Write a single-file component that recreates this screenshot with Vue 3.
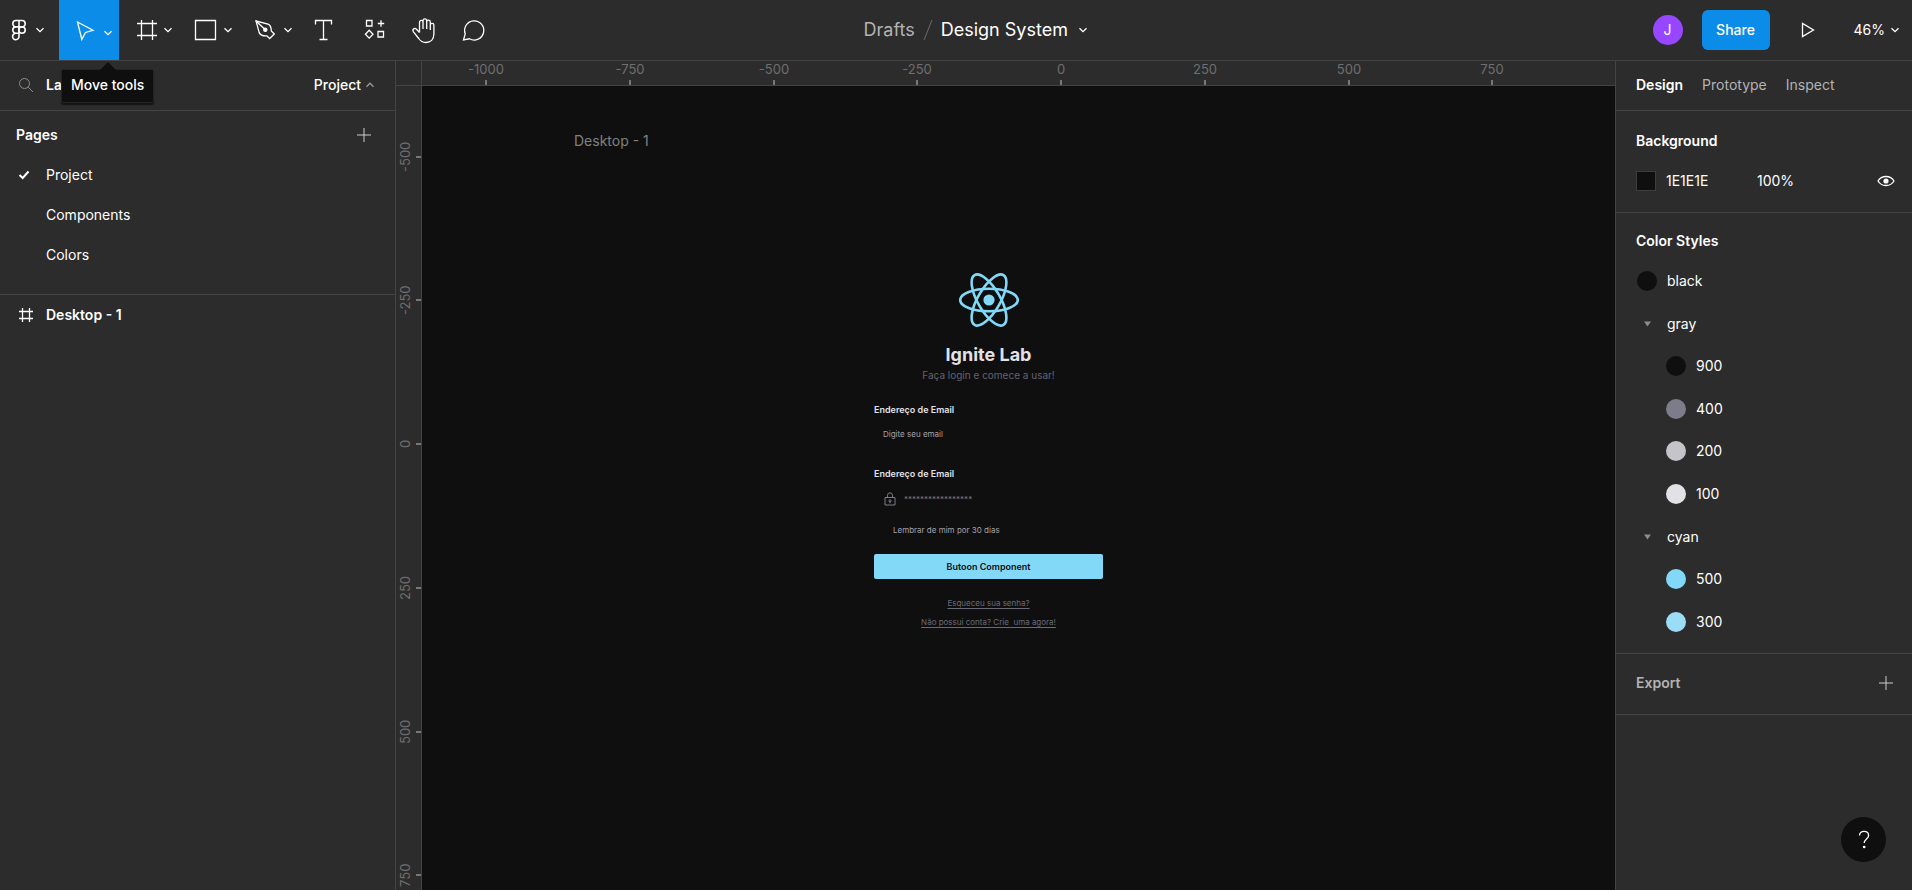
<script setup>
import { ref } from 'vue'

const SCALE = 0.575
const ticksX = [-1000, -750, -500, -250, 0, 250, 500, 750]
const ticksY = [-500, -250, 0, 250, 500, 750]
const atX = (v) => Math.round(639 + v * SCALE) + 'px'
const atY = (v) => Math.round(358 + v * SCALE) + 'px'

const pages = ['Project', 'Components', 'Colors']
const currentPage = ref('Project')

const styles = [
  { name: 'black', color: '#0f0f0f', level: 0 },
  { name: 'gray', group: true, level: 0 },
  { name: '900', color: '#0f0f0f', level: 1 },
  { name: '400', color: '#7c7c8a', level: 1 },
  { name: '200', color: '#c4c4c9', level: 1 },
  { name: '100', color: '#e1e1e6', level: 1 },
  { name: 'cyan', group: true, level: 0 },
  { name: '500', color: '#81d8f7', level: 1 },
  { name: '300', color: '#9bddf7', level: 1 }
]

const hex = ref('1E1E1E')
const opacity = ref('100%')
const password = ref('*****************')
</script>

<template>
  <div class="app">
    <header class="topbar">
      <nav class="tools" aria-label="Tools">
        <button class="tool menu" aria-label="Main menu">
          <svg class="icon" viewBox="0 0 36 36">
            <path d="M18 8.5h-3a3.2 3.2 0 0 0 0 6.4h3zM18 8.5h3a3.2 3.2 0 0 1 0 6.4h-3zM18 14.9h-3a3.2 3.2 0 0 0 0 6.4h3zM18 21.3h-3a3.2 3.2 0 1 0 3 3.2z" />
            <circle cx="21" cy="18.1" r="3.2" />
          </svg>
          <svg class="chev" viewBox="0 0 10 10"><path d="M1.5 3.2 5 6.7l3.5-3.5" /></svg>
        </button>
        <button class="tool active" aria-label="Move" aria-describedby="tip">
          <svg class="icon" viewBox="0 0 36 36"><path d="M10.5 10 26 18.3l-7.5 2.2-3.7 7z" /></svg>
          <svg class="chev low" viewBox="0 0 10 10"><path d="M1.5 3.2 5 6.7l3.5-3.5" /></svg>
        </button>
        <button class="tool" aria-label="Frame">
          <svg class="icon" viewBox="0 0 36 36"><path d="M14.5 8v20M25.500 8v20M10 11.500h20M10 23.500h20" /></svg>
          <svg class="chev" viewBox="0 0 10 10"><path d="M1.5 3.2 5 6.7l3.5-3.5" /></svg>
        </button>
        <button class="tool" aria-label="Rectangle">
          <svg class="icon" viewBox="0 0 36 36"><path d="M8.5 8.5h20v19h-20z" /></svg>
          <svg class="chev" viewBox="0 0 10 10"><path d="M1.5 3.2 5 6.7l3.5-3.5" /></svg>
        </button>
        <button class="tool" aria-label="Pen">
          <svg class="icon" viewBox="0 0 36 36">
            <path d="M9 9l12 3.2c2 .8 3.300 3.500 3.300 6.800l3 3-4.600 4.500-2.800-2.600c-4 .3-6.600-1-7.700-3.300z" />
            <path d="M9 9l8.500 8" />
            <circle cx="18.3" cy="17.8" r="1.6" class="solid" />
          </svg>
          <svg class="chev" viewBox="0 0 10 10"><path d="M1.5 3.2 5 6.7l3.5-3.5" /></svg>
        </button>
        <button class="tool single" aria-label="Text">
          <svg class="icon" viewBox="0 0 36 36"><path d="M9.500 12.500v-4h16v4M17.500 8.500v19M13.500 27.500h8" /></svg>
        </button>
        <button class="tool single" aria-label="Resources">
          <svg class="icon" viewBox="0 0 36 36">
            <path d="M10.500 8.500H16V14h-5.500zM22 19.500h5.500V25H22zM25 8.300v6.400M21.800 11.500h6.400M13.200 18.300l3.800 3.900-3.800 3.900-3.800-3.900z" />
          </svg>
        </button>
        <button class="tool single" aria-label="Hand">
          <svg class="icon" viewBox="0 0 36 36">
            <path d="M13.500 20.500V10.300c0-2.500 3.500-2.500 3.500 0V17M17 10V8.800c0-2.600 3.700-2.600 3.700 0V17M20.700 10c0-2.400 3.600-2.400 3.600 0v8M24.300 13c0-2.300 3.600-2.300 3.600 0v9c0 5.500-3.500 8.500-8 8.500-3.600 0-5.500-1.500-7.200-4l-5.200-6.700c-1.800-2.600 1.300-4.400 3-2.500l3 3.200" />
          </svg>
        </button>
        <button class="tool single" aria-label="Comment">
          <svg class="icon" viewBox="0 0 36 36"><path d="M7.500 28l1.700-6.200a9.600 9.600 0 1 1 4.300 5z" /></svg>
        </button>
      </nav>

      <div class="title">
        <a href="#" class="drafts">Drafts</a>
        <svg class="slash" viewBox="0 0 10 22"><path d="M9 1 1 21" /></svg>
        <button class="file">
          Design System
          <svg class="chev" viewBox="0 0 10 10"><path d="M1.5 3.2 5 6.7l3.5-3.5" /></svg>
        </button>
      </div>

      <div class="actions">
        <span class="avatar">J</span>
        <button class="share">Share</button>
        <button class="play" aria-label="Present">
          <svg viewBox="0 0 14 16"><path d="M1.5 1.5v13L12.500 8z" /></svg>
        </button>
        <button class="zoom">
          46%
          <svg class="chev" viewBox="0 0 10 10"><path d="M1.5 3.2 5 6.7l3.5-3.5" /></svg>
        </button>
      </div>
    </header>

    <main class="workspace">
      <aside class="left">
        <div class="layer-tabs">
          <button class="search" aria-label="Search">
            <svg viewBox="0 0 16 16"><circle cx="6.5" cy="6.5" r="5" /><path d="M10.2 10.2 15 15" /></svg>
          </button>
          <button class="ltab" aria-label="Layers">La</button>
          <button class="page-menu">
            Project
            <svg class="chev" viewBox="0 0 10 10"><path d="M1.5 6.700 5 3.200l3.500 3.500" /></svg>
          </button>
          <div id="tip" class="tooltip" role="tooltip">Move tools</div>
        </div>

        <section class="pages">
          <div class="pages-head">
            <h2>Pages</h2>
            <button class="plus" aria-label="Add page">
              <svg viewBox="0 0 16 16"><path d="M8 1v14M1 8h14" /></svg>
            </button>
          </div>
          <button v-for="p in pages" :key="p" class="row" @click="currentPage = p">
            <span class="mark">
              <svg v-if="p === currentPage" class="check" viewBox="0 0 12 10"><path d="M1.500 5 4.700 8l5.800-6.500" /></svg>
            </span>
            {{ p }}
          </button>
        </section>

        <button class="row layer">
          <span class="mark">
            <svg class="hash" viewBox="0 0 16 16"><path d="M4.500 1v14M11.500 1v14M1 4.500h14M1 11.500h14" /></svg>
          </span>
          Desktop - 1
        </button>
      </aside>

      <div class="stage">
        <div class="corner"></div>
        <div class="ruler-x">
          <span v-for="t in ticksX" :key="t" class="tick" :style="{ left: atX(t) }">{{ t }}</span>
        </div>
        <div class="ruler-y">
          <span v-for="t in ticksY" :key="t" class="tick" :style="{ top: atY(t) }"><b>{{ t }}</b></span>
        </div>
        <div class="canvas">
          <div class="frame-label">Desktop - 1</div>
          <form class="frame" @submit.prevent>
            <svg class="react" viewBox="0 0 60 54">
              <g>
                <ellipse cx="30" cy="27" rx="28.8" ry="11.2" />
                <ellipse cx="30" cy="27" rx="28.8" ry="11.2" transform="rotate(60 30 27)" />
                <ellipse cx="30" cy="27" rx="28.8" ry="11.2" transform="rotate(120 30 27)" />
              </g>
              <circle cx="30" cy="27" r="5.6" />
            </svg>
            <h1>Ignite Lab</h1>
            <p class="lead">Faça login e comece a usar!</p>
            <label for="email">Endereço de Email</label>
            <div class="field">
              <input id="email" type="text" placeholder="Digite seu email" />
            </div>
            <label for="pass">Endereço de Email</label>
            <div class="field locked">
              <svg class="lock" viewBox="0 0 12 14">
                <path d="M1 5.5h10V13H1zM3.500 5.500V3.300a2.500 2.500 0 0 1 5 0v2.200M6 9.300v2" />
                <circle cx="6" cy="8.800" r="1" />
              </svg>
              <input id="pass" v-model="password" type="text" />
            </div>
            <p class="remember">Lembrar de mim por 30 dias</p>
            <button class="cta">Butoon Component</button>
            <a href="#">Esqueceu sua senha?</a>
            <a href="#">Não possui conta? Crie&nbsp; uma agora!</a>
          </form>
        </div>
      </div>

      <aside class="right">
        <nav class="tabs">
          <button class="on">Design</button>
          <button>Prototype</button>
          <button>Inspect</button>
        </nav>
        <section class="background">
          <h2>Background</h2>
          <div class="fill">
            <span class="chip"></span>
            <input v-model="hex" class="hex" aria-label="Background color" />
            <input v-model="opacity" class="opacity" aria-label="Background opacity" />
            <button class="eye" aria-label="Toggle visibility">
              <svg viewBox="0 0 18 12"><path d="M1 6c3.500-6 12.500-6 16 0-3.500 6-12.500 6-16 0z" /><circle cx="9" cy="6" r="2.600" /></svg>
            </button>
          </div>
        </section>
        <section class="colors">
          <h2>Color Styles</h2>
          <ul>
            <li v-for="s in styles" :key="s.name" :class="{ nested: s.level }">
              <svg v-if="s.group" class="tri" viewBox="0 0 20 20"><path d="M7 7.500h7l-3.500 5z" /></svg>
              <span v-else class="dot" :style="{ background: s.color }"></span>
              {{ s.name }}
            </li>
          </ul>
        </section>
        <section class="export">
          <h2>Export</h2>
          <button class="plus" aria-label="Add export">
            <svg viewBox="0 0 16 16"><path d="M8 1v14M1 8h14" /></svg>
          </button>
        </section>
        <button class="help" aria-label="Help">
          <svg viewBox="0 0 12 20"><path d="M1.500 5.500C1.500 2.800 3.400 1.300 6 1.300s4.600 1.600 4.600 4.100c0 3.400-4.400 3.700-4.400 7.600" /><circle cx="6.200" cy="17" r="0.700" /></svg>
        </button>
      </aside>
    </main>
  </div>
</template>

<style>
body {
  margin: 0;
  background: #2c2c2c;
}
</style>

<style scoped>
.app {
  height: 100vh;
  display: flex;
  flex-direction: column;
  overflow: hidden;
  background: #2c2c2c;
  color: #fff;
  font: 400 14px/20px Inter, "Liberation Sans", sans-serif;
}
button, input {
  font: inherit;
  color: inherit;
  background: none;
  border: 0;
  padding: 0;
  margin: 0;
  outline: 0;
}
h1, h2, p, ul {
  margin: 0;
  padding: 0;
  list-style: none;
}
a { color: inherit; }
svg {
  display: block;
  flex: none;
  fill: none;
  stroke: currentColor;
}
h2 {
  font-size: 14px;
  font-weight: 600;
}
.topbar {
  flex: none;
  height: 60px;
  display: flex;
  border-bottom: 1px solid #444;
}
.tools { display: flex; }
.tool {
  width: 60px;
  padding-left: 8px;
  display: flex;
  align-items: center;
}
.tool.menu {
  width: 59px;
  padding-left: 1px;
}
.tool.menu .chev { margin-left: -2px; }
.tool.single {
  width: 50px;
  padding-left: 7px;
}
.tool.active { background: #0c8ce9; }
.icon {
  width: 36px;
  height: 36px;
  stroke-width: 1.3;
}
.menu .icon { stroke-width: 1.6; }
.icon .solid { fill: currentColor; }
.chev {
  width: 10px;
  height: 10px;
  stroke-width: 1.3;
}
.chev.low { margin-top: 6px; }
.title {
  flex: 1;
  display: flex;
  align-items: center;
  justify-content: center;
  font-size: 18px;
}
.drafts {
  color: #b3b3b3;
  text-decoration: none;
}
.slash {
  width: 10px;
  height: 22px;
  margin: 0 8px;
  color: #6a6a6a;
}
.file {
  display: flex;
  align-items: center;
  gap: 10px;
}
.actions {
  display: flex;
  align-items: center;
  padding: 0 12px 0 200px;
}
.avatar {
  width: 30px;
  height: 30px;
  border-radius: 50%;
  background: #9747ff;
  line-height: 30px;
  text-align: center;
}
.share {
  width: 68px;
  height: 40px;
  margin: 0 31px 0 19px;
  border-radius: 6px;
  background: #0c8ce9;
  font-weight: 500;
}
.play svg {
  width: 14px;
  height: 16px;
  stroke-width: 1.3;
}
.zoom {
  display: flex;
  align-items: center;
  gap: 5px;
  margin-left: 39px;
}
.workspace {
  flex: 1;
  min-height: 0;
  display: grid;
  grid-template-columns: 396px minmax(0, 1fr) 297px;
}
.left { border-right: 1px solid #444; }
.layer-tabs {
  position: relative;
  height: 47px;
  display: flex;
  align-items: center;
  padding: 0 20px 2px 18px;
  border-bottom: 1px solid #444;
}
.search {
  width: 28px;
  color: #8c8c8c;
}
.search svg {
  width: 16px;
  height: 16px;
}
.ltab { font-weight: 600; }
.page-menu {
  display: flex;
  align-items: center;
  gap: 4px;
  margin-left: auto;
  font-weight: 500;
}
.page-menu .chev { color: #9a9a9a; }
.tooltip {
  position: absolute;
  z-index: 2;
  left: 61px;
  top: 8px;
  padding: 5px 9px 7px;
  border: 1px solid #242424;
  border-radius: 2px;
  background: #0f0f0f;
  box-shadow: 0 2px 1px 0 #141414;
  font-weight: 500;
}
.tooltip::before {
  content: "";
  position: absolute;
  left: 38px;
  top: -8px;
  border: 8px solid transparent;
  border-top: 0;
  border-bottom-color: #0f0f0f;
}
.pages {
  height: 183px;
  border-bottom: 1px solid #444;
}
.pages-head {
  height: 40px;
  padding: 4px 23px 0 16px;
  display: flex;
  align-items: center;
  justify-content: space-between;
}
.plus { color: #ccc; }
.plus svg {
  width: 16px;
  height: 16px;
}
.row {
  width: 100%;
  height: 40px;
  display: flex;
  align-items: center;
  padding-left: 18px;
  text-align: left;
}
.mark { width: 28px; }
.check {
  width: 12px;
  height: 10px;
  stroke-width: 2;
}
.hash {
  width: 16px;
  height: 16px;
  stroke-width: 1.3;
}
.layer { font-weight: 600; }
.stage {
  display: grid;
  grid-template-columns: 26px minmax(0, 1fr);
  grid-template-rows: 25px minmax(0, 1fr);
}
.corner, .ruler-x, .ruler-y {
  box-sizing: border-box;
  border: 0 solid #444;
  position: relative;
  overflow: hidden;
  color: #6f6f6f;
  font-size: 13px;
}
.corner { border-width: 0 1px 1px 0; }
.ruler-x { border-bottom-width: 1px; }
.ruler-y { border-right-width: 1px; }
.ruler-x .tick {
  position: absolute;
  bottom: 0;
  width: 60px;
  height: 24px;
  line-height: 16px;
  text-align: center;
  transform: translateX(-50%);
}
.ruler-x .tick::after {
  content: "";
  position: absolute;
  left: 29px;
  bottom: 0;
  width: 2px;
  height: 5px;
  background: #777;
}
.ruler-y .tick {
  position: absolute;
  left: 0;
  width: 25px;
  height: 60px;
  display: flex;
  justify-content: center;
  padding-right: 7px;
  box-sizing: border-box;
  transform: translateY(-50%);
}
.ruler-y .tick b {
  font-weight: 400;
  writing-mode: vertical-rl;
  transform: rotate(180deg);
  text-align: center;
}
.ruler-y .tick::after {
  content: "";
  position: absolute;
  right: 0;
  top: 29px;
  width: 5px;
  height: 2px;
  background: #777;
}
.canvas {
  position: relative;
  overflow: hidden;
  background: #0f0f0f;
}
.frame-label {
  position: absolute;
  left: 152px;
  top: 45px;
  color: #808080;
}
.frame {
  position: absolute;
  left: 452px;
  top: 187px;
  width: 229px;
  display: flex;
  flex-direction: column;
  font-size: 8px;
  line-height: 12px;
  color: #c4c4cc;
}
.react {
  width: 60px;
  height: 54px;
  align-self: center;
  color: #81d8f7;
  stroke-width: 2.6;
}
.react circle {
  fill: currentColor;
  stroke: none;
}
h1 {
  margin-top: 16px;
  font-size: 18px;
  line-height: 24px;
  font-weight: 700;
  text-align: center;
  color: #e1e1e6;
}
.lead {
  font-size: 10px;
  line-height: 16px;
  text-align: center;
  color: #626270;
  margin-bottom: 21px;
}
label {
  font-size: 9px;
  line-height: 12px;
  font-weight: 600;
  color: #e1e1e6;
}
.field {
  height: 28px;
  margin: 4px 0 20px;
  padding-left: 9px;
  display: flex;
  align-items: center;
}
.field input {
  width: 100%;
  color: #7c7c8a;
}
.field input::placeholder {
  color: #a3a3ad;
  opacity: 1;
}
.field.locked {
  margin: 5px 0 11px;
  padding-left: 10px;
  gap: 8px;
}
.lock {
  width: 12px;
  height: 14px;
  color: #7c7c8a;
}
.remember {
  padding-left: 19px;
  color: #a3a3ad;
}
.cta {
  height: 25px;
  margin: 18px 0;
  border-radius: 2px;
  background: #81d8f7;
  color: #0f0f0f;
  font-size: 9px;
  font-weight: 600;
}
.frame a {
  align-self: center;
  margin-bottom: 7px;
  color: #6a6a77;
  text-underline-offset: 2px;
}
.right { border-left: 1px solid #444; }
.tabs {
  height: 47px;
  padding: 0 0 2px 20px;
  display: flex;
  gap: 19px;
  border-bottom: 1px solid #444;
}
.tabs button { color: #b3b3b3; }
.tabs .on {
  color: #fff;
  font-weight: 600;
}
.background, .colors, .export {
  padding: 20px 17px 0 20px;
  border-bottom: 1px solid #444;
}
.fill {
  height: 20px;
  padding: 20px 0 21px;
  display: flex;
  align-items: center;
}
.chip {
  flex: none;
  width: 18px;
  height: 18px;
  border: 1px solid #3d3d3d;
  background: #0f0f0f;
}
.hex {
  width: 91px;
  padding-left: 10px;
  box-sizing: border-box;
}
.hex, .opacity { min-width: 0; }
.opacity {
  margin-left: 10px;
  flex: 1;
}
.eye svg {
  width: 18px;
  height: 12px;
  stroke-width: 1.3;
}
.eye circle {
  fill: currentColor;
  stroke: none;
}
.colors { padding: 18px 20px 10px; }
.colors ul {
  height: 383px;
  padding-top: 9px;
  display: grid;
  grid-auto-rows: minmax(0, 1fr);
}
.colors li {
  display: flex;
  align-items: center;
  gap: 10px;
  padding-left: 1px;
}
.colors li.nested { padding-left: 30px; }
.dot, .tri {
  width: 20px;
  height: 20px;
  border-radius: 50%;
}
.tri {
  fill: #8c8c8c;
  stroke: none;
}
.export {
  height: 58px;
  padding: 0 18px 2px 20px;
  display: flex;
  align-items: center;
  justify-content: space-between;
}
.export h2 { color: #b3b3b3; }
.help {
  position: fixed;
  right: 26px;
  bottom: 28px;
  width: 45px;
  height: 45px;
  border-radius: 50%;
  background: #0f0f0f;
  display: flex;
  align-items: center;
  justify-content: center;
}
.help svg {
  width: 12px;
  height: 20px;
  stroke-width: 1.3;
}
.help circle { fill: currentColor; }
</style>
